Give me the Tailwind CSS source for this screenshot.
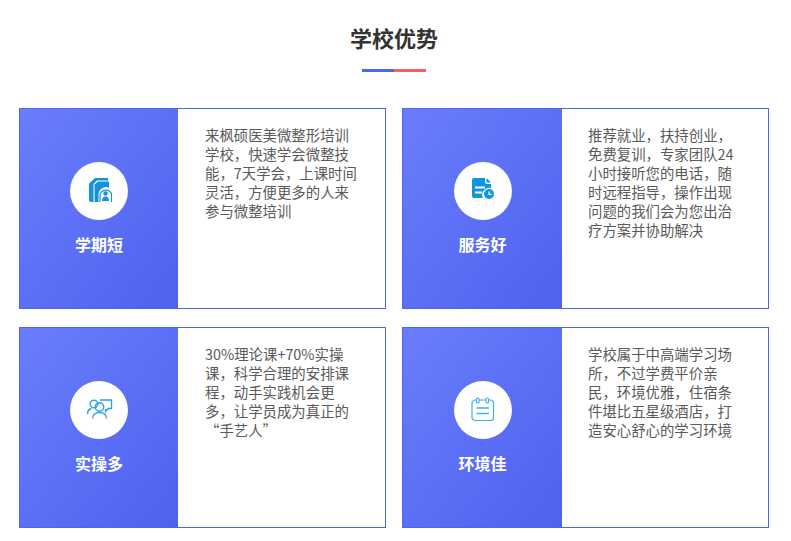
<!DOCTYPE html>
<html lang="zh-CN">
<head>
  <meta charset="UTF-8" />
  <meta name="viewport" content="width=device-width, initial-scale=1.0" />
  <title>学校优势</title>
  <script src="https://cdn.jsdelivr.net/npm/@tailwindcss/browser@4"></script>
</head>
<body class="bg-white font-['Noto_Sans_CJK_SC','Noto_Sans',sans-serif] overflow-hidden">
  <div class="w-[791px] h-[541px] pt-[22px] pl-[19px]">

    <!-- Heading -->
    <div class="w-[750px] flex flex-col items-center">
      <h2 class="text-[22px] leading-[30px] font-bold text-[#333]">学校优势</h2>
      <div class="flex mt-[17px]">
        <span class="w-[32px] h-[3px] bg-[#4f66e8]"></span>
        <span class="w-[32px] h-[3px] bg-[#fb5f62]"></span>
      </div>
    </div>

    <div class="grid grid-cols-[367px_367px] gap-x-[16px] gap-y-[18px] mt-[36px]">

      <!-- Card 1 -->
      <div class="flex h-[201px] border border-[#4f66e8]">
        <div class="w-[158px] shrink-0 flex flex-col items-center pt-[53px] bg-gradient-to-br from-[#6a7dfd] to-[#4d62ee]">
          <div class="w-[58px] h-[58px] rounded-full bg-white flex items-center justify-center">
            <svg width="32" height="32" viewBox="-1 1 32 32">
              <path d="M5 9.500 L11 4 L24 4 L24 6.500 L13 6.500 L9.500 10 L9.500 28 L7 28 Q5 28 5 26 Z" fill="#1593d6"/>
              <path d="M10.500 10.500 L14 7.500 L25 7.500 L25 13.500 A7.800 7.800 0 0 0 14.500 21 V28 H10.500 Z" fill="#1593d6"/>
              <path d="M16 28 V21 A6 6 0 0 1 27.500 20 V28" fill="none" stroke="#1593d6" stroke-width="1.200"/>
              <circle cx="21.500" cy="19.500" r="2.200" fill="#1593d6"/>
              <path d="M18 27 Q18 22.500 21.500 22.500 Q25 22.500 25 27 Z" fill="#1593d6"/>
            </svg>
          </div>
          <div class="mt-[11px] text-[16px] leading-[26px] font-bold text-white">学期短</div>
        </div>
        <p class="pl-[27px] pt-[16px] text-[14.4px] leading-[19px] text-[#5a5a5a] whitespace-nowrap">来枫硕医美微整形培训<br>学校，快速学会微整技<br>能，7天学会，上课时间<br>灵活，方便更多的人来<br>参与微整培训</p>
      </div>

      <!-- Card 2 -->
      <div class="flex h-[201px] border border-[#4f66e8]">
        <div class="w-[159px] shrink-0 flex flex-col items-center pt-[53px] bg-gradient-to-br from-[#6a7dfd] to-[#4d62ee]">
          <div class="w-[58px] h-[58px] rounded-full bg-white flex items-center justify-center">
            <svg width="32" height="32" viewBox="0 1 32 32">
              <path d="M7 4 H18 V8 Q18 10 20 10 H24 V14 A7 7 0 0 0 16 24 H7 Q5 24 5 22 V6 Q5 4 7 4 Z" fill="#0f96dc"/>
              <path d="M19.500 4 L24 8.500 H19.500 Z" fill="#0f96dc"/>
              <path d="M8 13.500 H18 M8 18.500 H15" stroke="#fff" stroke-width="1.800" fill="none"/>
              <circle cx="22" cy="20" r="5" fill="#0f96dc"/>
              <path d="M22 17.500 V20.300 H24.500" stroke="#fff" stroke-width="1.200" fill="none"/>
            </svg>
          </div>
          <div class="mt-[11px] text-[16px] leading-[26px] font-bold text-white">服务好</div>
        </div>
        <p class="pl-[26px] pt-[16px] text-[14.4px] leading-[19px] text-[#5a5a5a] whitespace-nowrap">推荐就业，扶持创业，<br>免费复训，专家团队24<br>小时接听您的电话，随<br>时远程指导，操作出现<br>问题的我们会为您出治<br>疗方案并协助解决</p>
      </div>

      <!-- Card 3 -->
      <div class="flex h-[201px] border border-[#4f66e8]">
        <div class="w-[158px] shrink-0 flex flex-col items-center pt-[53px] bg-gradient-to-br from-[#6a7dfd] to-[#4d62ee]">
          <div class="w-[58px] h-[58px] rounded-full bg-white flex items-center justify-center">
            <svg width="32" height="32" viewBox="-1 0 32 32" fill="none" stroke="#2fa3dc" stroke-width="1.400">
              <path d="M16 6 H27.500 V14.500 H24.500 L21.500 17.500 V15"/>
              <circle cx="10" cy="10" r="3.800"/>
              <path d="M3.500 20 Q3.500 15.500 7.500 14.500"/>
              <circle cx="15.500" cy="13" r="4.200"/>
              <path d="M8.500 24.500 Q9 18.500 15.500 18.500 Q22 18.500 22.500 24.500"/>
            </svg>
          </div>
          <div class="mt-[11px] text-[16px] leading-[26px] font-bold text-white">实操多</div>
        </div>
        <p class="pl-[27px] pt-[16px] text-[14.4px] leading-[19px] text-[#5a5a5a] whitespace-nowrap">30%理论课+70%实操<br>课，科学合理的安排课<br>程，动手实践机会更<br>多，让学员成为真正的<br>“手艺人”</p>
      </div>

      <!-- Card 4 -->
      <div class="flex h-[201px] border border-[#4f66e8]">
        <div class="w-[159px] shrink-0 flex flex-col items-center pt-[53px] bg-gradient-to-br from-[#6a7dfd] to-[#4d62ee]">
          <div class="w-[58px] h-[58px] rounded-full bg-white flex items-center justify-center">
            <svg width="32" height="32" viewBox="0 0 32 32" fill="none" stroke="#3fb0ea" stroke-width="1.200">
              <rect x="5" y="6" width="21.500" height="20.500" rx="3"/>
              <rect x="9.500" y="4" width="2.600" height="5" rx="1.300" fill="#fff"/>
              <rect x="19" y="4" width="2.600" height="5" rx="1.300" fill="#fff"/>
              <path d="M9.500 14 H22 M9.500 19.500 H22" stroke-width="1.700"/>
            </svg>
          </div>
          <div class="mt-[11px] text-[16px] leading-[26px] font-bold text-white">环境佳</div>
        </div>
        <p class="pl-[26px] pt-[16px] text-[14.4px] leading-[19px] text-[#5a5a5a] whitespace-nowrap">学校属于中高端学习场<br>所，不过学费平价亲<br>民，环境优雅，住宿条<br>件堪比五星级酒店，打<br>造安心舒心的学习环境</p>
      </div>

    </div>
  </div>
</body>
</html>
